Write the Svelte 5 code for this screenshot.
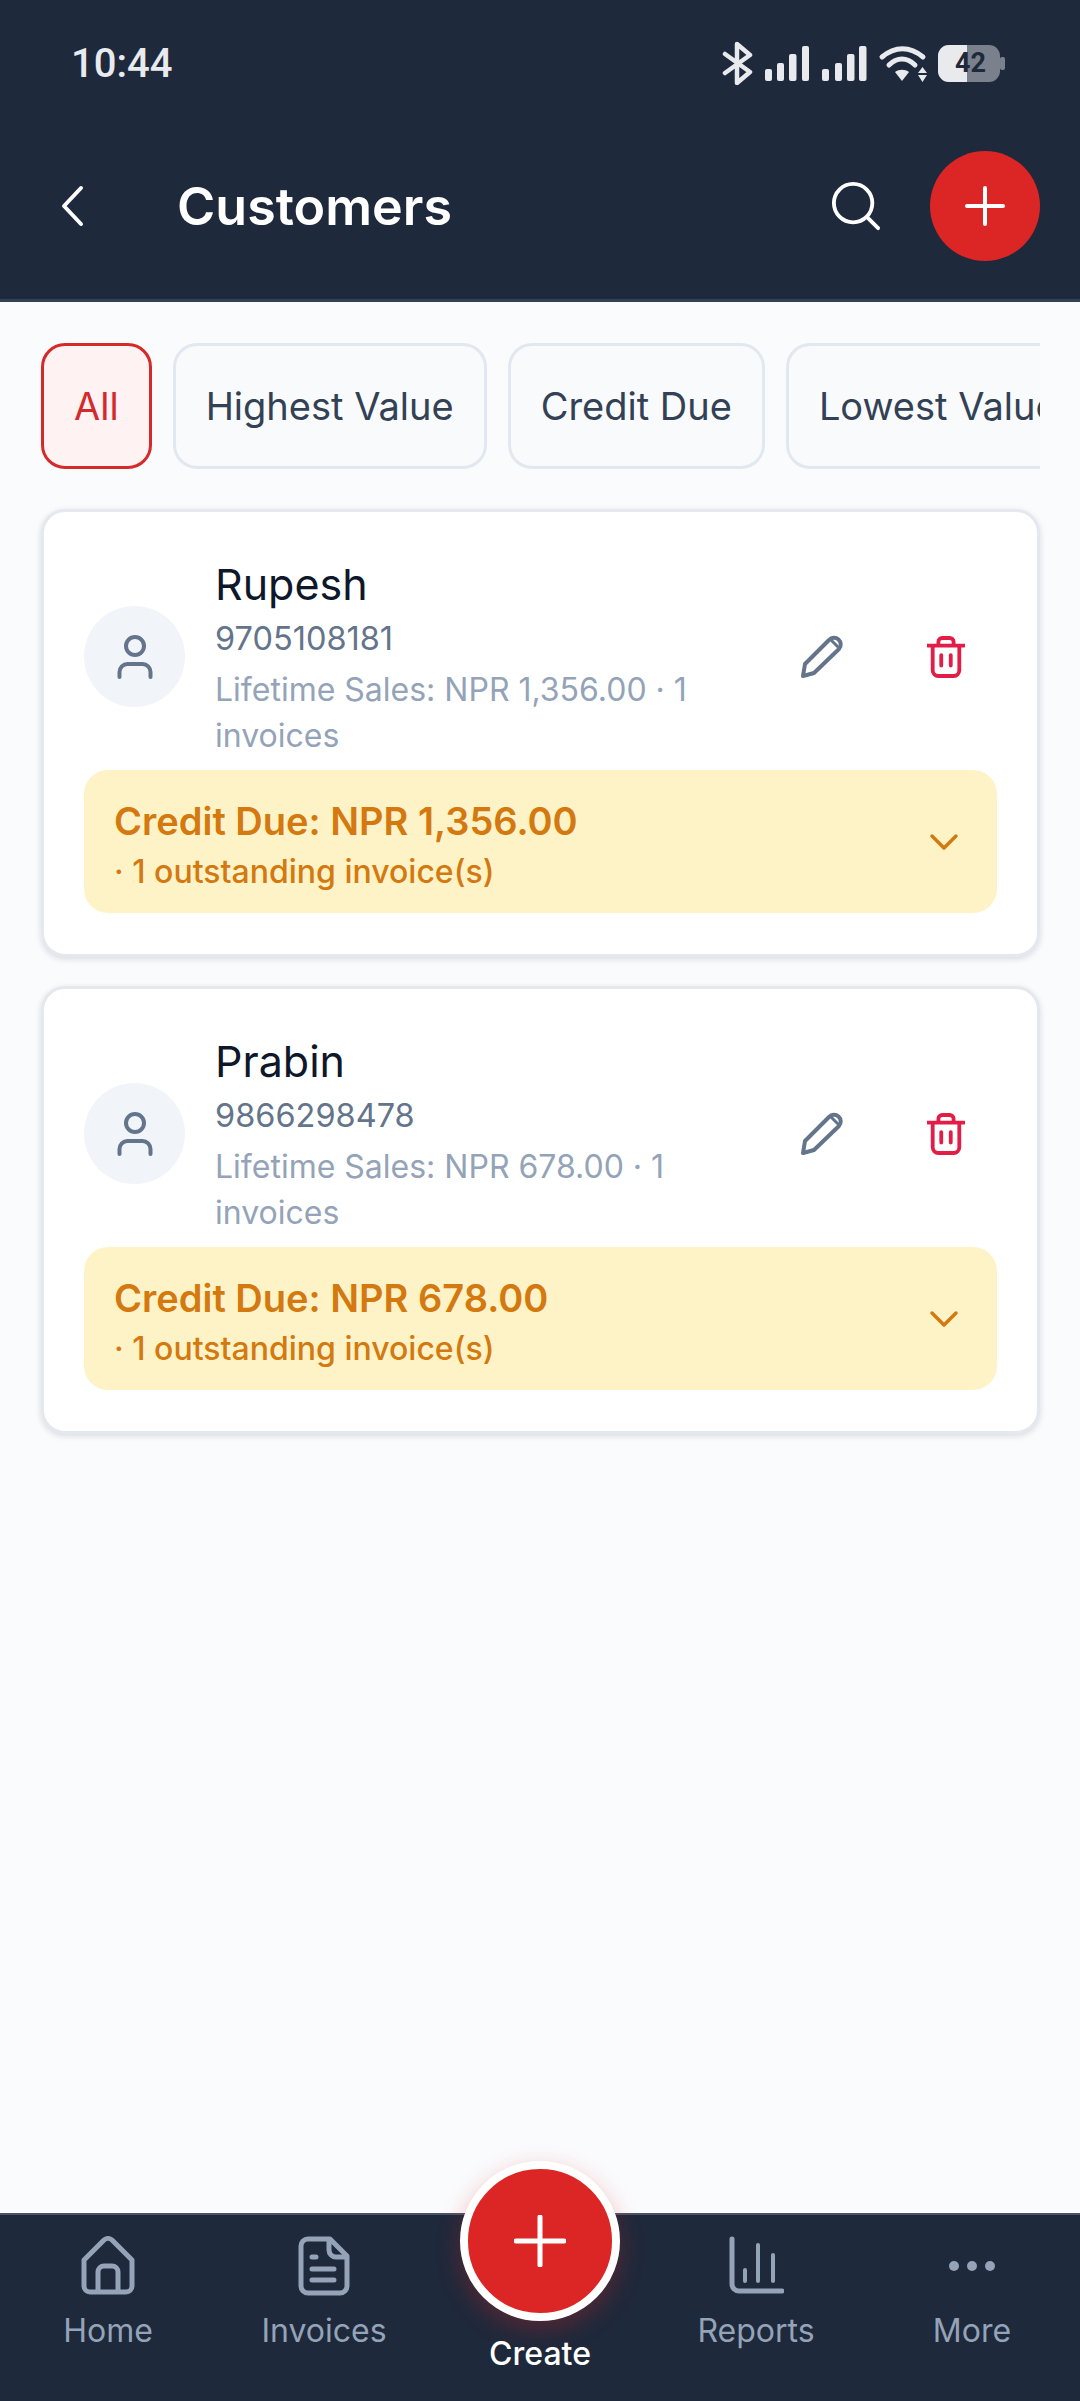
<script>
const filters = ["All", "Highest Value", "Credit Due", "Lowest Value"];
const customers = [
	{ name: "Rupesh", phone: "9705108181", sales: "NPR 1,356.00", due: "NPR 1,356.00" },
	{ name: "Prabin", phone: "9866298478", sales: "NPR 678.00", due: "NPR 678.00" }
];
const tabs = ["Home", "Invoices", "Create", "Reports", "More"];
</script>

<div class="page">
	<header>
		<div class="status">
			<span class="time">10:44</span>
			<svg class="status-icons" width="286" height="44" viewBox="0 0 286 44">
				<!-- bluetooth -->
				<path d="M5 13 L30 31 L17 42 V3 L30 14 L5 32" fill="none" stroke="#e8eaee" stroke-width="4.500" stroke-linejoin="round" stroke-linecap="round"/>
				<!-- signal -->
				<g fill="#e8eaee">
					<rect x="45" y="28" width="7" height="12" rx="2"/><rect x="57" y="22" width="7" height="18" rx="2"/><rect x="69" y="13" width="7.500" height="27" rx="2"/><rect x="82" y="5" width="7" height="35" rx="2"/>
					<rect x="102" y="28" width="7" height="12" rx="2"/><rect x="115" y="22" width="7" height="18" rx="2"/><rect x="127" y="13" width="7.500" height="27" rx="2"/><rect x="139" y="5" width="7.500" height="35" rx="2"/>
				</g>
				<!-- wifi -->
				<path d="M162 16 C175 5 190 5 203 16" fill="none" stroke="#e8eaee" stroke-width="5" stroke-linecap="round"/>
				<path d="M169 24 C177 16 187 16 195 24" fill="none" stroke="#e8eaee" stroke-width="5" stroke-linecap="round"/>
				<path d="M175 31 C179 28 185 28 189 31 L182 40 Z" fill="#e8eaee"/>
				<path d="M198 32 L202.500 26 L207 32 Z M198 34 L207 34 L202.500 41 Z" fill="#e8eaee"/>
				<!-- battery -->
				<rect x="218" y="4" width="62" height="37" rx="11" fill="#7a818d"/>
				<path d="M229 4 H247 V41 H229 A11 11 0 0 1 218 30 V15 A11 11 0 0 1 229 4 Z" fill="#e8eaee"/>
				<rect x="280" y="16" width="5" height="13" rx="2" fill="#7a818d"/>
			</svg>
			<span class="battery-level">42</span>
		</div>
		<div class="bar">
			<svg class="back" width="30" height="44" viewBox="0 0 30 44">
				<path d="M23 4 L6 22 L23 40" fill="none" stroke="#fff" stroke-width="4" stroke-linecap="round" stroke-linejoin="round"/>
			</svg>
			<h1>Customers</h1>
			<svg class="search" width="50" height="50" viewBox="0 0 52 52">
				<circle cx="23" cy="23" r="20" fill="none" stroke="#fff" stroke-width="4"/>
				<path d="M38 38 L49 49" stroke="#fff" stroke-width="4" stroke-linecap="round"/>
			</svg>
			<button class="add" aria-label="Add customer">
				<svg width="40" height="40" viewBox="0 0 40 40">
					<path d="M20 2 V38 M2 20 H38" stroke="#fff" stroke-width="4" stroke-linecap="round"/>
				</svg>
			</button>
		</div>
	</header>

	<main>
		<div class="filters">
			{#each filters as f, i}
				<button class="chip" class:active={i === 0}>{f}</button>
			{/each}
		</div>

		{#each customers as c}
			<section class="card">
				<div class="row">
					<div class="avatar">
						<svg width="40" height="46" viewBox="0 0 40 46">
							<circle cx="20" cy="12" r="9" fill="none" stroke="#64748b" stroke-width="4"/>
							<path d="M4.500 43 V38 A8 8 0 0 1 12.500 30 H27.500 A8 8 0 0 1 35.500 38 V43" fill="none" stroke="#64748b" stroke-width="4" stroke-linecap="round"/>
						</svg>
					</div>
					<div class="info">
						<div class="name">{c.name}</div>
						<div class="phone">{c.phone}</div>
						<div class="sales">Lifetime Sales: {c.sales} · 1 invoices</div>
					</div>
					<div class="actions">
						<svg width="44" height="44" viewBox="0 0 44 44">
							<path d="M5 29 L29 5 A6 6 0 0 1 39 14 L14 38 L3 41 Z" fill="none" stroke="#64748b" stroke-width="4" stroke-linejoin="round"/>
							<path d="M30 4 L40 14" stroke="#64748b" stroke-width="3"/>
						</svg>
						<svg width="38" height="42" viewBox="0 0 40 44">
							<path d="M1 10 H39" stroke="#e11d48" stroke-width="4" stroke-linecap="round"/>
							<path d="M12 9 V6 A4 4 0 0 1 16 2 H24 A4 4 0 0 1 28 6 V9" fill="none" stroke="#e11d48" stroke-width="4"/>
							<path d="M6 10 V36 A6 6 0 0 0 12 42 H28 A6 6 0 0 0 34 36 V10" fill="none" stroke="#e11d48" stroke-width="4"/>
							<path d="M15 20 V31 M25 20 V31" stroke="#e11d48" stroke-width="4" stroke-linecap="round"/>
						</svg>
					</div>
				</div>
				<div class="credit">
					<div>
						<div class="due">Credit Due: {c.due}</div>
						<div class="outstanding">· 1 outstanding invoice(s)</div>
					</div>
					<svg width="30" height="20" viewBox="0 0 30 20">
						<path d="M3 4 L15 16 L27 4" fill="none" stroke="#d4790f" stroke-width="3.500" stroke-linecap="round" stroke-linejoin="round"/>
					</svg>
				</div>
			</section>
		{/each}
	</main>

	<nav>
		{#each tabs as t}
			<div class="tab" class:create={t === "Create"}>
				{#if t === "Home"}
					<svg width="56" height="60" viewBox="0 0 56 60">
						<path d="M4 24 L24 4 A6 6 0 0 1 32 4 L52 24 V50 A6 6 0 0 1 46 56 H10 A6 6 0 0 1 4 50 Z" fill="none" stroke="#94a3b8" stroke-width="5" stroke-linejoin="round"/>
						<path d="M18 56 V36 A6 6 0 0 1 24 30 H32 A6 6 0 0 1 38 36 V56" fill="none" stroke="#94a3b8" stroke-width="5"/>
					</svg>
				{:else if t === "Invoices"}
					<svg width="52" height="60" viewBox="0 0 52 60">
						<path d="M10 3 H32 L49 20 V50 A7 7 0 0 1 42 57 H10 A7 7 0 0 1 3 50 V10 A7 7 0 0 1 10 3 Z" fill="none" stroke="#94a3b8" stroke-width="5" stroke-linejoin="round"/>
						<path d="M31 3 V14 A7 7 0 0 0 38 21 H49" fill="none" stroke="#94a3b8" stroke-width="5"/>
						<path d="M14 21 H18 M14 33 H36 M14 44 H36" stroke="#94a3b8" stroke-width="5" stroke-linecap="round"/>
					</svg>
				{:else if t === "Reports"}
					<svg width="56" height="60" viewBox="0 0 56 60">
						<path d="M4 3 V48 A7 7 0 0 0 11 55 H54" fill="none" stroke="#94a3b8" stroke-width="5" stroke-linecap="round"/>
						<path d="M17 34 V45 M30 9 V45 M45 19 V45" stroke="#94a3b8" stroke-width="4" stroke-linecap="round"/>
					</svg>
				{:else if t === "More"}
					<svg width="52" height="60" viewBox="0 0 52 60">
						<circle cx="8" cy="30" r="5" fill="#94a3b8"/><circle cx="26" cy="30" r="5" fill="#94a3b8"/><circle cx="44" cy="30" r="5" fill="#94a3b8"/>
					</svg>
				{/if}
				<span>{t}</span>
			</div>
		{/each}
		<button class="fab" aria-label="Create">
			<svg width="52" height="52" viewBox="0 0 52 52">
				<path d="M26 2 V50 M2 26 H50" stroke="#fff" stroke-width="5" stroke-linecap="round"/>
			</svg>
		</button>
	</nav>
</div>

<style>
:global(body) {
	margin: 0;
	background: #fafbfd;
	font-family: Inter, "Noto Sans", sans-serif;
}
.page {
	display: flex;
	flex-direction: column;
	width: 1080px;
	height: 2401px;
	overflow: hidden;
}
header {
	height: 299px;
	background: #1e293b;
	border-bottom: 3px solid #334155;
	color: #fff;
}
.status {
	position: relative;
	display: flex;
	align-items: center;
	justify-content: space-between;
	height: 44px;
	padding: 41px 74px 0 71px;
}
.time {
	font-family: Roboto, sans-serif;
	font-size: 40px;
	font-weight: 500;
	color: #e8eaee;
}
.battery-level {
	position: absolute;
	right: 94px;
	top: 47px;
	font-family: Roboto, sans-serif;
	font-size: 27px;
	font-weight: 700;
	line-height: 32px;
	color: #1e293b;
}
.bar {
	display: flex;
	align-items: center;
	height: 110px;
	margin-top: 66px;
	padding: 0 40px 0 58px;
}
h1 {
	flex: 1;
	margin: 0 0 0 89px;
	font-size: 52px;
	font-weight: 600;
}
.search {
	margin-right: 49px;
}
button {
	font-family: inherit;
	padding: 0;
}
.add {
	display: flex;
	align-items: center;
	justify-content: center;
	width: 110px;
	height: 110px;
	border: none;
	border-radius: 50%;
	background: #dc2626;
}
main {
	flex: 1;
	padding: 41px 40px 0 41px;
}
.filters {
	display: flex;
	gap: 21px;
	overflow: hidden;
}
.chip {
	flex: none;
	height: 126px;
	padding: 0 30px;
	border: 3px solid #e2e8f0;
	border-radius: 24px;
	background: #f8fafc;
	color: #334155;
	font-size: 38px;
}
.chip.active {
	border-color: #d42a2a;
	background: #fef2f2;
	color: #d42a2a;
}
.card {
	height: 448px;
	box-sizing: border-box;
	margin-top: 40px;
	padding: 36px 40px 0 40px;
	border: 3px solid #e5e9ef;
	border-radius: 24px;
	background: #fff;
	box-shadow: 0 2px 6px rgba(15, 23, 42, 0.14);
}
.card + .card {
	margin-top: 29px;
}
.row {
	display: flex;
	align-items: center;
	height: 217px;
}
.avatar {
	display: flex;
	flex: none;
	align-items: center;
	justify-content: center;
	width: 101px;
	height: 101px;
	border-radius: 50%;
	background: #f1f5f9;
}
.info {
	flex: 1;
	margin-left: 30px;
	min-width: 0;
}
.name {
	font-size: 43px;
	line-height: 58px;
	color: #0f172a;
}
.phone {
	margin-top: 3px;
	font-size: 32.500px;
	line-height: 46px;
	color: #64748b;
}
.sales {
	width: 520px;
	margin-top: 5px;
	font-size: 32px;
	line-height: 46px;
	color: #94a3b8;
}
.actions {
	display: flex;
	gap: 83px;
	align-items: center;
	padding-right: 32px;
}
.credit {
	display: flex;
	align-items: center;
	justify-content: space-between;
	height: 143px;
	box-sizing: border-box;
	margin-top: 5px;
	padding: 6px 38px 0 30px;
	border-radius: 24px;
	background: #fef3c7;
	color: #d4790f;
}
.credit svg {
	margin-top: -6px;
}
.due {
	font-size: 38px;
	font-weight: 600;
	line-height: 52px;
}
.outstanding {
	margin-top: 3px;
	font-size: 32px;
	font-weight: 500;
	line-height: 44px;
}
nav {
	position: relative;
	display: flex;
	height: 188px;
	background: #1e293b;
	border-top: 2px solid #475569;
	box-sizing: border-box;
}
.tab {
	display: flex;
	flex: 1;
	flex-direction: column;
	align-items: center;
	height: 124px;
	padding-top: 21px;
	color: #94a3b8;
	font-size: 32px;
}
.tab svg {
	height: 60px;
	margin-bottom: 13px;
}
.tab span {
	line-height: 44px;
}
.tab.create {
	justify-content: flex-end;
	color: #fff;
	height: 140px;
	font-weight: 500;
}
.fab {
	position: absolute;
	left: 460px;
	top: -54px;
	display: flex;
	align-items: center;
	justify-content: center;
	width: 160px;
	height: 160px;
	box-sizing: border-box;
	border: 8px solid #fff;
	border-radius: 50%;
	background: #dc2626;
	box-shadow: 0 8px 24px rgba(220, 38, 38, 0.3);
}
</style>
